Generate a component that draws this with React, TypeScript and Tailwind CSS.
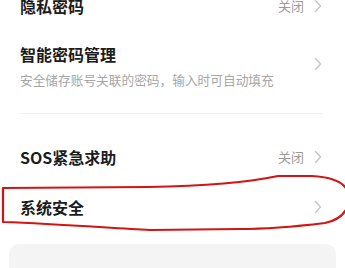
import React from 'react'

const Chevron = () => (
  <svg width="8" height="14" viewBox="0 0 8 14" className="shrink-0">
    <polyline points="1.5,1.5 6.5,7 1.5,12.5" fill="none" stroke="#c4c4c4" strokeWidth="1.3" strokeLinecap="round" strokeLinejoin="round" />
  </svg>
)

const Row: React.FC<{ title: string; value?: string; className?: string }> = ({ title, value, className }) => (
  <div className={`flex items-center justify-between pl-5 pr-[23px] ${className ?? ''}`}>
    <span className="text-[16px] font-semibold leading-[22px] text-[#1c1c1c]">{title}</span>
    <div className="flex items-center gap-[10px]">
      {value && <span className="text-[13px] leading-[18px] text-[#9a9a9a]">{value}</span>}
      <Chevron />
    </div>
  </div>
)

export default function App() {
  return (
    <div
      className="relative w-[345px] h-[268px] overflow-hidden bg-white"
      style={{ fontFamily: '"Noto Sans CJK SC", "Noto Sans", sans-serif' }}
    >
      <Row title="隐私密码" value="关闭" className="h-[56px] -mt-[22px]" />

      <div className="flex h-[60px] items-center justify-between pl-5 pr-[23px]">
        <div className="mt-[4px] flex flex-col">
          <span className="text-[16px] font-semibold leading-[22px] text-[#1c1c1c]">智能密码管理</span>
          <span className="mt-[6px] text-[12.7px] leading-[18px] text-[#a6a6a6]">安全储存账号关联的密码，输入时可自动填充</span>
        </div>
        <Chevron />
      </div>

      <div className="mt-[19px] ml-5 mr-[23px] h-px bg-[#f0f0f0]" />

      <div className="h-[18px]" />
      <Row title="SOS紧急求助" value="关闭" className="h-[50px]" />
      <Row title="系统安全" className="h-[50px]" />

      <div className="mx-[9px] mt-[12px] h-[40px] rounded-[10px] bg-[#f4f4f4] px-6 pt-[19px]">
        <span className="text-[13px] leading-[18px] text-[#cfcfcf]">安全检测与隐私保护建议</span>
      </div>

      <svg className="pointer-events-none absolute left-0 top-0" width="345" height="268" viewBox="0 0 345 268">
        <path
          d="M3 222 L3 188 L148 187 C200 186 245 183 278 176 L312 176 C330 177 343 182 347 190 L347 208 C343 216 335 221 325 223 C300 226 270 229 240 229 L150 230 C110 228 60 224 3 222 Z"
          fill="none"
          stroke="#d41414"
          strokeWidth="2.2"
          strokeLinejoin="round"
        />
      </svg>
    </div>
  )
}
